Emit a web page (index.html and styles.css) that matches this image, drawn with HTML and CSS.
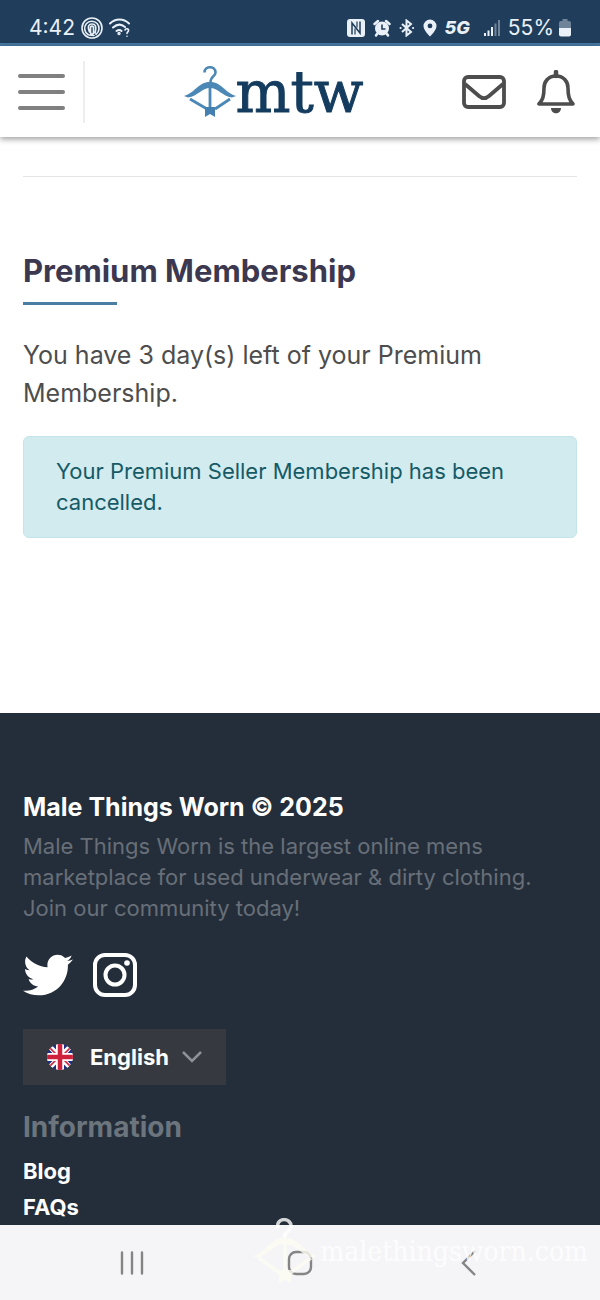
FILE: index.html
```html
<!DOCTYPE html>
<html lang="en">
<head>
  <meta charset="UTF-8">
  <meta name="viewport" content="width=device-width, initial-scale=1.0">
  <title>Male Things Worn</title>
  <link rel="stylesheet" href="styles.css">
</head>
<body>
  <div class="statusbar">
    <div class="status-group status-left">
      <span>4:42</span>
      <svg width="22" height="22" viewBox="0 0 22 22" fill="none" stroke="currentColor" stroke-width="1.6" stroke-linecap="round">
        <circle cx="11" cy="11" r="10"/>
        <path d="M7 17.500A7.200 7.200 0 1 1 15 17.300M8.500 15C6 9 8 7 11 7s5 2 3 9M9.500 11c0-2.500 3-2.500 3 0v4c0 3-3 3-3 0zM8 18l5 .5"/>
      </svg>
      <svg width="22" height="20" viewBox="0 0 22 20" fill="none" stroke="currentColor" stroke-width="2" stroke-linecap="round">
        <path d="M1 5.500C6.500.200 14.500.200 20 5.500M4 9.500c4-3.500 8.500-3.500 12-.5M7.500 13c2-1.500 3.500-1.500 5 0"/>
        <circle cx="10" cy="15.500" r=".7"/>
        <path stroke-width="1.600" d="M16 12c.5-2 4-1.500 3.500.7-.3 1.200-1.500 1.300-1.500 2.800M18 18.200v.1"/>
      </svg>
    </div>
    <div class="status-group status-right">
      <svg width="18" height="18" viewBox="0 0 18 18">
        <rect width="18" height="18" rx="3" fill="currentColor"/>
        <path d="M5 15.500V4l8 10V2.500" fill="none" stroke="#203d5b" stroke-width="1.500"/>
        <path d="M8 15.500V9.500M10 2.500v6" fill="none" stroke="#203d5b" stroke-width="1.200"/>
      </svg>
      <svg width="18" height="18" viewBox="0 0 18 18">
        <circle cx="9" cy="9.500" r="7" fill="currentColor"/>
        <path d="M1.500 5 5 2M16.500 5 13 2M4 15l-1 1.500M14 15l1 1.500" stroke="currentColor" stroke-width="2.500" stroke-linecap="round"/>
        <path d="M9 5.500V10h3.500" fill="none" stroke="#203d5b" stroke-width="1.600"/>
      </svg>
      <svg width="16" height="18" viewBox="0 0 16 18" fill="none" stroke="currentColor" stroke-width="2">
        <path d="m3 5 9 8-4.500 3.500v-15L12 5l-9 8"/>
        <path stroke-linecap="round" d="M1.500 9h.2M14 9h.2"/>
      </svg>
      <svg width="14" height="18" viewBox="0 0 14 18">
        <path fill="currentColor" fill-rule="evenodd" d="M7 .5A6.500 6.500 0 0 0 .5 7c0 4.500 6.500 10.500 6.500 10.500S13.500 11.500 13.500 7A6.500 6.500 0 0 0 7 .5m0 4a2.400 2.400 0 1 1 0 4.800 2.400 2.400 0 0 1 0-4.800"/>
      </svg>
      <span class="network">5G</span>
      <svg width="16" height="18" viewBox="0 0 16 18" fill="currentColor">
        <path d="M0 14h2v3H0zM3.500 11.500h2V17h-2zM7 8h2v9H7z"/>
        <path opacity=".4" d="M10.500 4.500h2V17h-2zM14 1h2v16h-2z"/>
      </svg>
      <span class="battery">
        55%
        <svg width="12" height="18" viewBox="0 0 12 18" fill="currentColor">
          <path opacity=".4" d="M3.500 0h5v2H10a2 2 0 0 1 2 2v5H0V4a2 2 0 0 1 2-2h1.500z"/>
          <path d="M0 9h12v6.500a2 2 0 0 1-2 2H2a2 2 0 0 1-2-2z"/>
        </svg>
      </span>
    </div>
  </div>

  <header class="header">
    <button class="menu-btn" type="button" aria-label="Menu">
      <span></span><span></span><span></span>
    </button>
    <a class="logo" href="#" aria-label="mtw home">
      <svg width="52" height="52" viewBox="0 0 52 52" fill="none">
        <path d="M20.500 6.500c0-7 11-7 11 0 0 4-5 3.500-5 10" stroke="#4c88b5" stroke-width="2.600"/>
        <path d="M0 30c11-3 14-14 26-14s15 11 26 14l-4 1.500C38 30 34 22 26 22S14 30 4 31.500z" fill="#4c88b5"/>
        <path d="m6 33 17 10M46 33 31 43M26 22v24" stroke="#4c88b5" stroke-width="2.800"/>
        <path d="M21 41h10v10l-5-3-5 3z" fill="#4481b0"/>
      </svg>
      <span>mtw</span>
    </a>
    <nav class="header-links">
      <a href="#" aria-label="Messages">
        <svg width="44" height="34" viewBox="0 0 44 34" fill="none" stroke="currentColor" stroke-width="3.800">
          <rect x="2" y="2" width="40" height="30" rx="4"/>
          <path d="m3 9 14 12c3.500 3 6.500 3 10 0L41 9"/>
        </svg>
      </a>
      <a href="#" aria-label="Notifications">
        <svg width="38" height="44" viewBox="0 0 38 44">
          <path d="M19 2v4" stroke="currentColor" stroke-width="4.500" stroke-linecap="round"/>
          <path d="M19 6C11 6 7 12 7 18c0 9-1.500 12-5 16h34c-3.500-4-5-7-5-16 0-6-4-12-12-12z" fill="none" stroke="currentColor" stroke-width="3.600" stroke-linejoin="round"/>
          <path d="M14 38h10c0 7-10 7-10 0" fill="currentColor"/>
        </svg>
      </a>
    </nav>
  </header>

  <main class="content">
    <hr class="divider">
    <h1>Premium Membership</h1>
    <p class="lead">You have 3 day(s) left of your Premium Membership.</p>
    <div class="alert" role="alert">Your Premium Seller Membership has been cancelled.</div>
  </main>

  <footer class="footer">
    <h2>Male Things Worn © 2025</h2>
    <p class="about">Male Things Worn is the largest online mens marketplace for used underwear &amp; dirty clothing. Join our community today!</p>
    <div class="social">
      <a href="#" aria-label="Twitter">
        <svg width="50" height="50" viewBox="0 0 512 512" fill="currentColor">
          <path d="M459.370 151.716c.325 4.548.325 9.097.325 13.645 0 138.720-105.583 298.558-298.558 298.558-59.452 0-114.680-17.219-161.137-47.106 8.447.974 16.568 1.299 25.340 1.299 49.055 0 94.213-16.568 130.274-44.832-46.132-.975-84.792-31.188-98.112-72.772 6.498.974 12.995 1.624 19.818 1.624 9.421 0 18.843-1.300 27.614-3.573-48.081-9.747-84.143-51.980-84.143-102.985v-1.299c13.969 7.797 30.214 12.670 47.431 13.319-28.264-18.843-46.781-51.005-46.781-87.391 0-19.492 5.197-37.360 14.294-52.954 51.655 63.675 129.300 105.258 216.365 109.807-1.624-7.797-2.599-15.918-2.599-24.040 0-57.828 46.782-104.934 104.934-104.934 30.213 0 57.502 12.670 76.670 33.137 23.715-4.548 46.456-13.320 66.599-25.340-7.798 24.366-24.366 44.833-46.132 57.827 21.117-2.273 41.584-8.122 60.426-16.243-14.292 20.791-32.161 39.308-52.628 54.253z"/>
        </svg>
      </a>
      <a href="#" aria-label="Instagram">
        <svg width="44" height="44" viewBox="0 0 44 44" fill="none" stroke="currentColor" stroke-width="4">
          <rect x="2" y="2" width="40" height="40" rx="10"/>
          <circle cx="22" cy="22" r="9.500"/>
          <circle cx="34" cy="10" r="2.800" fill="currentColor" stroke="none"/>
        </svg>
      </a>
    </div>
    <div class="language">
      <svg width="26" height="26" viewBox="0 0 26 26">
        <clipPath id="flag"><circle cx="13" cy="13" r="13"/></clipPath>
        <g clip-path="url(#flag)">
          <path fill="#1c2f86" d="M0 0h26v26H0z"/>
          <path stroke="#fff" stroke-width="5" d="m0 0 26 26M26 0 0 26"/>
          <path stroke="#d0213c" stroke-width="1.600" d="m0 1 11 11M26 1 15 12M0 25l11-11M26 25 15 14"/>
          <path stroke="#fff" stroke-width="8" d="M13 0v26M0 13h26"/>
          <path stroke="#d0213c" stroke-width="4.500" d="M13 0v26M0 13h26"/>
        </g>
      </svg>
      <select aria-label="Language">
        <option>English</option>
      </select>
      <svg class="chevron" width="20" height="12" viewBox="0 0 20 12" fill="none" stroke="#8e9296" stroke-width="2.500">
        <path d="m1 1 9 9 9-9"/>
      </svg>
    </div>
    <h3>Information</h3>
    <ul class="links">
      <li><a href="#">Blog</a></li>
      <li><a href="#">FAQs</a></li>
    </ul>
  </footer>

  <nav class="navbar">
    <button type="button" aria-label="Recent apps">
      <svg width="24" height="24" viewBox="0 0 24 24" stroke="currentColor" stroke-width="2.400" stroke-linecap="round"><path d="M2 1.500v21M12 1.500v21M22 1.500v21"/></svg>
    </button>
    <button type="button" aria-label="Home">
      <svg width="26" height="26" viewBox="0 0 26 26" fill="none" stroke="currentColor" stroke-width="2.400"><rect x="2" y="2" width="22" height="22" rx="7"/></svg>
    </button>
    <button type="button" aria-label="Back">
      <svg width="26" height="26" viewBox="0 0 26 26" fill="none" stroke="currentColor" stroke-width="2.400"><path d="M20 1 8 13l12 12"/></svg>
    </button>
    <div class="watermark">
      <svg width="66" height="66" viewBox="0 0 66 66" fill="none">
        <path d="M26 10c-3-11 14-11 13-1-1 5-7 4-6.500 11" stroke="#fff" stroke-opacity=".8" stroke-width="3.500"/>
        <g opacity=".8">
          <path d="M1 38c14-4 17-18 32-18s18 14 32 18l-5 2C48 36 44 26 33 26S18 36 6 40z" fill="#fdfdf4"/>
          <path d="m7 40 22 16M59 40 37 56M33 26v32" stroke="#fdfdf4" stroke-width="3.500"/>
          <path d="M27 52h12v13l-6-3-6 3z" fill="#fdfdf4"/>
        </g>
      </svg>
      <span>malethingsworn.com</span>
    </div>
  </nav>
</body>
</html>
```
FILE: styles.css
```css
* {
  box-sizing: border-box;
}

body {
  margin: 0;
  min-height: 100vh;
  display: flex;
  flex-direction: column;
  font-family: Inter, "Liberation Sans", sans-serif;
  background: #fff;
  color: #4d4d4d;
}

h1, h2, h3, p, ul {
  margin: 0;
}

svg {
  display: block;
}

a {
  color: inherit;
  text-decoration: none;
}

button {
  padding: 0;
  border: 0;
  background: none;
  color: inherit;
}

.statusbar {
  display: flex;
  justify-content: space-between;
  align-items: center;
  height: 46px;
  padding: 12px 29px 0;
  border-bottom: 3px solid #4678a0;
  background: #203d5b;
  color: #e9f0f7;
  font-size: 21px;
}

.status-group {
  display: flex;
  align-items: center;
}

.status-left {
  gap: 6px;
}

.status-right {
  gap: 8px;
}

.network {
  margin-right: 6px;
  font-size: 18px;
  font-style: italic;
  font-weight: 800;
}

.battery {
  display: flex;
  align-items: center;
  gap: 5px;
}

.header {
  display: flex;
  align-items: center;
  justify-content: space-between;
  height: 91px;
  padding: 0 25px 0 18px;
  box-shadow: 0 2px 6px rgba(0, 0, 0, 0.4);
}

.menu-btn {
  display: grid;
  gap: 12px;
  align-content: center;
  width: 67px;
  height: 62px;
  padding-right: 18px;
  border-right: 2px solid #eee;
}

.menu-btn span {
  height: 4px;
  border-radius: 2px;
  background: #808080;
}

.logo {
  display: flex;
  align-items: center;
  color: #143c5f;
  font-family: "DejaVu Serif", serif;
  font-size: 58px;
  line-height: 64px;
  -webkit-text-stroke: 1px #143c5f;
}

.header-links {
  display: flex;
  align-items: center;
  gap: 31px;
  color: #4d4d4d;
}

.content {
  padding: 39px 23px 175px;
}

.divider {
  margin: 0 0 74px;
  border: 0;
  border-top: 1px solid #e5e5e5;
}

h1 {
  color: #3b3850;
  font-size: 31px;
  line-height: 40px;
}

h1::after {
  content: "";
  display: block;
  width: 94px;
  height: 3px;
  margin-top: 11px;
  background: #4a7fa3;
}

.lead {
  margin-top: 31px;
  font-size: 25px;
  line-height: 38px;
}

.alert {
  margin-top: 24px;
  padding: 19px 32px;
  border: 1px solid #c3e5ea;
  border-radius: 6px;
  background: #d1ebef;
  color: #165a66;
  font-size: 22px;
  line-height: 31px;
}

.footer {
  flex: 1 0 auto;
  padding: 78px 23px 0;
  background: #242e3a;
  color: #fff;
}

h2 {
  font-size: 25px;
  line-height: 32px;
}

.about {
  margin-top: 8px;
  color: #686f78;
  font-size: 22px;
  line-height: 31px;
}

.social {
  display: flex;
  align-items: center;
  gap: 20px;
  margin-top: 26px;
}

.language {
  display: flex;
  align-items: center;
  gap: 17px;
  width: fit-content;
  height: 56px;
  margin-top: 29px;
  padding: 0 24px;
  background: #363a40;
}

.language select {
  appearance: none;
  padding: 0;
  border: 0;
  background: none;
  color: #fff;
  font: bold 22px/32px Inter, "Liberation Sans", sans-serif;
}

.chevron {
  margin-left: -4px;
}

h3 {
  margin-top: 24px;
  color: #6c757d;
  font-size: 28px;
  line-height: 36px;
}

.links {
  padding: 8px 0 0;
  list-style: none;
  font-size: 22px;
  font-weight: bold;
  line-height: 36px;
}

.navbar {
  position: sticky;
  bottom: 0;
  display: flex;
  flex: none;
  align-items: center;
  justify-content: center;
  gap: 120px;
  height: 75px;
  background: #f5f5f8;
  color: #858585;
}

.navbar button {
  display: grid;
  place-items: center;
  width: 48px;
  height: 48px;
}

.watermark {
  position: absolute;
  right: 12px;
  bottom: 16px;
  display: flex;
  align-items: center;
  gap: 2px;
  color: rgba(255, 255, 255, 0.8);
  font-family: "DejaVu Serif Condensed", "DejaVu Serif", serif;
  font-size: 28px;
  pointer-events: none;
}
```
